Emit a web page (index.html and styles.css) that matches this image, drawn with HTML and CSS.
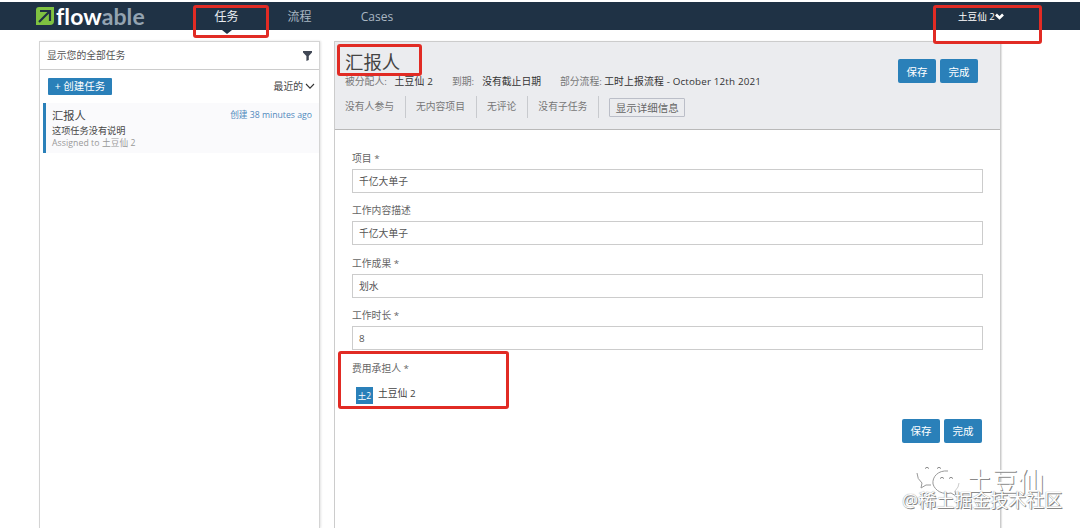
FILE: index.html
```
<!DOCTYPE html>
<html lang="zh">

	<head>
		<meta charset="UTF-8">
		<title>Flowable</title>
		<link rel="stylesheet" href="styles.css">
	</head>

	<body>
		<div class="header">
			<div class="logo">
				<svg width="18" height="18" viewBox="0 0 18 18">
					<path d="M3 0H18V14Q18 18 14 18H0V3Q0 0 3 0Z" fill="#7fc241" />
					<path d="M4 4H14V14M14 4L3 15" fill="none" stroke="#1f3245" stroke-width="2.2" />
				</svg>
				<span class="logo-text">flow<i>able</i></span>
			</div>
			<ul class="nav">
				<li class="current">任务</li>
				<li>流程</li>
				<li>Cases</li>
			</ul>
			<div class="user">
				土豆仙 2
				<svg width="9" height="7" viewBox="0 0 9 7"><path d="M1 1.5L4.5 5L8 1.5" fill="none" stroke="#fff" stroke-width="2.6" /></svg>
			</div>
		</div>

		<div class="main">
			<div class="list">
				<div class="filter">
					<span>显示您的全部任务</span>
					<svg width="9" height="10" viewBox="0 0 9 10"><path d="M0 0H9V1.5L5.8 5V9L3.4 10V5L0 1.5Z" fill="#414855" /></svg>
				</div>
				<div class="tools">
					<button class="btn create">+ 创建任务</button>
					<span class="sort">最近的
						<svg width="10" height="7" viewBox="0 0 10 7"><path d="M1 1L5 5.2L9 1" fill="none" stroke="#333" stroke-width="1.1" /></svg>
					</span>
				</div>
				<div class="task">
					<div class="task-top">
						<span class="task-name">汇报人</span>
						<span class="task-time">创建 38 minutes ago</span>
					</div>
					<p class="task-desc">这项任务没有说明</p>
					<p class="task-user">Assigned to 土豆仙 2</p>
				</div>
			</div>

			<div class="detail">
				<div class="detail-head">
					<div class="detail-info">
						<h2>汇报人</h2>
						<div class="info">
							<span class="w1">被分配人: <b>土豆仙 2</b></span>
							<span class="w2">到期: <b>没有截止日期</b></span>
							<span class="w3">部分流程: <b>工时上报流程 - October 12th 2021</b></span>
						</div>
						<div class="meta">
							<span>没有人参与</span>
							<span>无内容项目</span>
							<span>无评论</span>
							<span>没有子任务</span>
							<button class="show">显示详细信息</button>
						</div>
					</div>
					<div class="btns">
						<button class="btn">保存</button>
						<button class="btn">完成</button>
					</div>
				</div>
				<div class="form">
					<div class="field">
						<label>项目 *</label>
						<div class="input">千亿大单子</div>
					</div>
					<div class="field">
						<label>工作内容描述</label>
						<div class="input">千亿大单子</div>
					</div>
					<div class="field">
						<label>工作成果 *</label>
						<div class="input">划水</div>
					</div>
					<div class="field">
						<label>工作时长 *</label>
						<div class="input">8</div>
					</div>
					<div class="field person">
						<label>费用承担人 *</label>
						<div class="people"><span class="avatar">土2</span>土豆仙 2</div>
					</div>
					<div class="btns">
						<button class="btn">保存</button>
						<button class="btn">完成</button>
					</div>
				</div>
			</div>
		</div>

		<!-- red marks -->
		<div class="mark mark-nav"></div>
		<div class="mark mark-user"></div>
		<div class="mark mark-title"></div>
		<div class="mark mark-person"></div>

		<!-- watermark -->
		<div class="wechat">
			<svg width="46" height="34" viewBox="0 0 46 34">
				<path d="M17 21Q12 21 8 20L4 23L5 17C-2 10 2 0 15 0C24 0 30 4 31 9" fill="#fff" />
				<path d="M1 7Q1 13 6 17L5 22L10 19H15" fill="none" stroke="#999" />
				<ellipse cx="30" cy="17" rx="13" ry="11.500" fill="#fff" />
				<path d="M32 5C22 4 16 11 17 18C19 25 27 29 35 27L40 30L39 25" fill="none" stroke="#999" />
				<path d="M39 25Q43 21 43 17" fill="none" stroke="#ccc" />
				<path d="M9 2.500Q11 0 13 2.500M21 2.500Q23 0 25 2.500M24 12.500Q26 10 28 12.500M33 12.500Q35 10 37 12.500" fill="none" stroke="#888" />
			</svg>
			<span>土豆仙</span>
		</div>
		<div class="community">@稀土掘金技术社区</div>
	</body>

</html>
```
FILE: styles.css
```
* {
	margin: 0;
	padding: 0;
	box-sizing: border-box;
	list-style: none;
}

body {
	width: 1080px;
	height: 528px;
	padding-top: 2px;
	overflow: hidden;
	position: relative;
	background: #fff;
	color: #444;
	font: 9.8px/14px "Open Sans", "Noto Sans CJK SC", sans-serif;
	white-space: nowrap;
}

button {
	font-family: inherit;
}

.header {
	display: flex;
	height: 28px;
	padding-left: 36px;
	background: #1f3245;
}

.logo {
	display: flex;
	width: 154px;
	padding-top: 5px;
}

.logo svg {
	flex: none;
}

.logo-text {
	margin-left: 2px;
	color: #fff;
	font: 700 23px/18px Lato, sans-serif;
	letter-spacing: 0.1px;
}

.logo-text i {
	color: #93a3b1;
	font-style: normal;
}

.nav {
	display: flex;
	flex: 1;
}

.nav li {
	width: 73px;
	height: 28px;
	line-height: 29px;
	font-size: 12px;
	color: #a9b6c2;
	text-align: center;
	position: relative;
}

.nav li:last-child {
	width: 82px;
}

.nav .current {
	color: #e8edf1;
}

.nav .current:after {
	content: "";
	position: absolute;
	left: 32px;
	top: 28px;
	border: 5px solid transparent;
	border-top: 4px solid #1f3245;
	border-bottom: 0;
}

.user {
	display: flex;
	align-items: center;
	gap: 0;
	width: 122px;
	padding-top: 1px;
	color: #fff;
	font-size: 9.6px;
}

.main {
	display: flex;
	gap: 14px;
	height: 487px;
	margin-top: 11px;
	padding-left: 39px;
}

.list {
	width: 281px;
	border: 1px solid #d4d4d4;
	border-bottom: 0;
	box-shadow: 1px 0 2px #e4e4e4;
}

.filter {
	display: flex;
	align-items: center;
	justify-content: space-between;
	height: 28px;
	padding: 0 7px;
	border-bottom: 1px solid #ccc;
	color: #555;
}

.tools {
	display: flex;
	justify-content: space-between;
	align-items: center;
	height: 33px;
	padding: 0 4px 0 8px;
}

.btn {
	width: 38px;
	height: 24px;
	border: 0;
	border-radius: 2px;
	background: #2a80b9;
	color: #fff;
	font-size: 10.5px;
}

.btn.create {
	width: 64px;
	height: 17px;
	line-height: 17px;
	border-radius: 1px;
}

.sort {
	display: flex;
	align-items: center;
	gap: 2px;
	font-size: 9.8px;
}

.task {
	height: 50px;
	margin-left: 3px;
	padding: 4px 7px 0 6px;
	border-left: 3px solid #2a80b9;
	background: #fafafc;
}

.task-top {
	display: flex;
	justify-content: space-between;
	height: 17px;
	line-height: 17px;
}

.task-name {
	font-size: 11.3px;
}

.task-time {
	color: #5189bd;
	font-size: 8.7px;
}

.task-desc {
	height: 13px;
	line-height: 14px;
	font-size: 9.2px;
}

.task-user {
	line-height: 13px;
	color: #999;
	font-size: 8.7px;
	letter-spacing: 0.07px;
}

.detail {
	width: 667px;
	border: 1px solid #ccc;
	border-bottom: 0;
	box-shadow: 1px 0 1px #e4e4e4;
}

.detail-head {
	display: flex;
	justify-content: space-between;
	height: 88px;
	padding: 8px 22px 0 10px;
	border-bottom: 1px solid #b9b9b9;
	background: #ebecef;
}

h2 {
	height: 24px;
	line-height: 23px;
	font-size: 18.4px;
	font-weight: 400;
}

.info {
	display: flex;
	height: 15px;
	line-height: 16px;
	color: #777;
}

.info span {
	display: flex;
}

.info b {
	margin-left: auto;
	color: #333;
	font-weight: 400;
}

.info .w1 {
	width: 88px;
	margin-right: 19px;
}

.info .w1 b {
	letter-spacing: 0.2px;
}

.info .w2 {
	width: 89px;
	margin-right: 19px;
}

.info .w3 {
	width: 201px;
}

.info .w3 b {
	letter-spacing: 0.17px;
}

.meta {
	display: flex;
	height: 22px;
	margin-top: 7px;
	line-height: 22px;
	color: #777;
}

.meta span {
	padding-right: 11px;
	border-right: 1px solid #c8cace;
	margin-right: 10px;
}

.show {
	width: 76px;
	height: 19px;
	margin-top: 2px;
	border: 1px solid #bbbec8;
	border-radius: 1px;
	background: none;
	color: #666;
	font-size: 10.5px;
}

.btns {
	display: flex;
	gap: 4px;
}

.detail-head .btns {
	padding-top: 9px;
}

.form {
	padding: 21px 17px 0;
	color: #666;
}

.field {
	height: 52.4px;
}

.field label {
	display: block;
	height: 18px;
	line-height: 16px;
}

.input {
	height: 24px;
	padding-left: 6px;
	border: 1px solid #ccc;
	line-height: 23px;
	color: #555;
}

.person {
	height: 58.4px;
}

.people {
	display: flex;
	padding: 8px 4px 0;
	line-height: 14px;
	color: #444;
}

.avatar {
	width: 17px;
	height: 17px;
	margin-right: 5px;
	background: #2a80b9;
	color: #fff;
	line-height: 17px;
	font-size: 8.5px;
	text-align: center;
}

.form .btns {
	justify-content: flex-end;
	padding-right: 1px;
}

.mark {
	position: absolute;
	border: 3px solid #e12b24;
	border-radius: 3px;
}

.mark-nav {
	left: 193px;
	top: 5px;
	width: 76px;
	height: 33px;
}

.mark-user {
	left: 933px;
	top: 5px;
	width: 109px;
	height: 39px;
}

.mark-title {
	left: 337px;
	top: 44px;
	width: 85px;
	height: 32px;
}

.mark-person {
	left: 338px;
	top: 351px;
	width: 171px;
	height: 58px;
}

.wechat {
	display: flex;
	position: absolute;
	left: 916px;
	top: 466px;
	font-size: 26px;
	line-height: 30px;
}

.wechat span {
	margin-left: 4px;
	color: #fff;
	text-shadow: 1px 1px 0 #8a8a8a;
}

.community {
	position: absolute;
	left: 902px;
	top: 488px;
	color: #fff;
	font-size: 18px;
	line-height: 24px;
	text-shadow: 0 0 1px #777, 1px 1px 0 #888;
}
```
